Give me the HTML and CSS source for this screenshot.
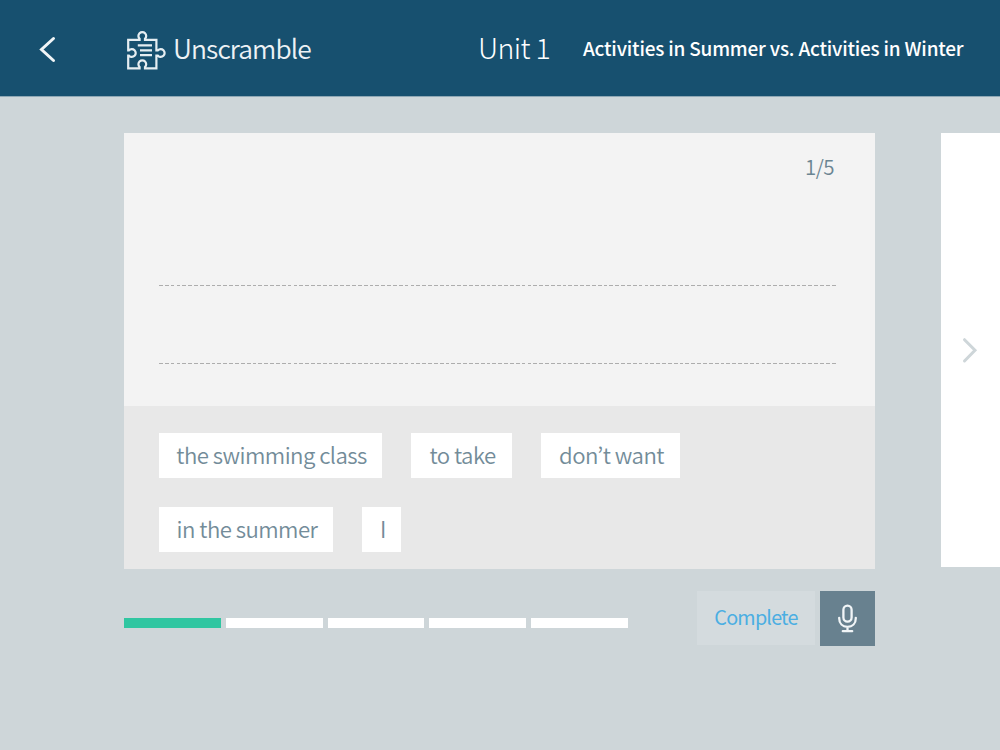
FILE: index.html
```html
<!DOCTYPE html>
<html lang="en">
<head>
    <meta charset="UTF-8">
    <meta name="viewport" content="width=device-width, initial-scale=1.0">
    <title>Unscramble</title>
    <link rel="stylesheet" href="styles.css">
</head>
<body>
    <header class="header">
        <a class="back" href="#" aria-label="Back">
            <svg width="20" height="30" viewBox="0 0 20 30">
                <path d="M16.5 5.5 L4.5 16.5 L16.5 27.5" />
            </svg>
        </a>
        <div class="activity">
            <svg class="puzzle" width="42" height="42" viewBox="0 0 42 42">
                <path d="M4.2 12.9 H15.6 V11.8 A3.9 3.9 0 1 1 21 11.8 V12.9 H32.4 V23.3 H33.9 A3.9 3.9 0 1 1 33.9 28.7 H32.4 V41.3 H21 V40 A3.9 3.9 0 1 0 15.6 40 V41.3 H4.2 V28.7 H5 A3.9 3.9 0 1 0 5 23.3 H4.2 Z" />
                <path class="text-lines" d="M13.8 18.4 H28 M16 23.3 H28 M16 28.1 H28" />
            </svg>
            <h1>Unscramble</h1>
        </div>
        <div class="unit">Unit 1</div>
        <div class="topic">Activities in Summer vs. Activities in Winter</div>
    </header>

    <main class="stage">
        <div class="slide">
            <section class="card">
                <!-- Answer lines -->
                <div class="answer">
                    <div class="count">1/5</div>
                    <div class="line"></div>
                    <div class="line"></div>
                </div>
                <!-- Word bank -->
                <div class="words">
                    <span class="word w1">the swimming class</span>
                    <span class="word w2">to take</span>
                    <span class="word w3">don’t want</span>
                    <span class="word w4">in the summer</span>
                    <span class="word w5">I</span>
                </div>
            </section>
            <div class="controls">
                <div class="progress">
                    <span class="step done"></span>
                    <span class="step"></span>
                    <span class="step"></span>
                    <span class="step"></span>
                    <span class="step"></span>
                </div>
                <button class="complete">Complete</button>
                <button class="mic" aria-label="Record">
                    <svg width="24" height="32" viewBox="0 0 24 32">
                        <rect x="7.4" y="2.6" width="8.2" height="16" rx="4.1" />
                        <path d="M3.2 14.8 V15.2 C3.2 20.6 6.6 23.8 11.5 23.8 C16.4 23.8 19.8 20.6 19.8 15.2 V14.8 M11.5 23.8 V28 M6.8 28.2 H16.2" />
                    </svg>
                </button>
            </div>
        </div>
        <aside class="next">
            <svg width="20" height="30" viewBox="0 0 20 30">
                <path d="M5.5 4.7 L16 15.3 L5.5 26" />
            </svg>
        </aside>
    </main>
</body>
</html>
```

FILE: styles.css
```css
* {
    box-sizing: border-box;
}

body {
    margin: 0;
    height: 750px;
    overflow: hidden;
    background-color: #ced6d9;
    font-family: "Noto Sans CJK KR", "Open Sans", sans-serif;
    font-weight: 350;
}

svg {
    display: block;
    fill: none;
    stroke: #f1f5f7;
    stroke-width: 2.3;
    stroke-linecap: round;
}

.header {
    display: flex;
    align-items: center;
    height: 96px;
    padding: 0 0 0 37px;
    background-color: #17506f;
    box-shadow: 0 1px 0 #8fa8b5;
    color: #fff;
    white-space: nowrap;
}

.back {
    width: 87px;
}

.back svg {
    stroke-width: 3;
}

.activity {
    display: flex;
    align-items: center;
    width: 354px;
}

.puzzle {
    margin-right: 7px;
    overflow: visible;
    stroke: #e6eef2;
    stroke-width: 2.2;
}

.text-lines {
    stroke-width: 2.2;
    stroke-linecap: butt;
}

h1 {
    margin: 0;
    padding-bottom: 1px;
    font-size: 26.4px;
    font-weight: 350;
    letter-spacing: -0.9px;
    color: #edf2f5;
}

.unit {
    width: 105px;
    font-size: 28.5px;
    font-weight: 300;
    letter-spacing: -0.6px;
    line-height: 40px;
    padding-bottom: 2px;
}

.topic {
    padding-bottom: 1px;
    font-size: 19px;
    font-weight: 500;
    letter-spacing: -0.2px;
}

.stage {
    display: flex;
    justify-content: space-between;
    padding: 37px 0 0 124px;
}

.slide {
    width: 751px;
}

.answer {
    height: 273px;
    padding: 16px 39px 0 35px;
    background-color: #f3f3f3;
}

.count {
    height: 136px;
    padding-right: 2px;
    text-align: right;
    font-size: 20.5px;
    letter-spacing: -0.5px;
    line-height: 35px;
    color: #6b8592;
}

.line {
    height: 1px;
    margin-bottom: 77px;
    background: repeating-linear-gradient(to right, #adadad 0, #adadad 3.8px, transparent 3.8px, transparent 5.85px);
}

.words {
    display: flex;
    flex-wrap: wrap;
    align-content: flex-start;
    gap: 29px;
    height: 163px;
    padding: 27px 35px 0;
    background-color: #e8e8e8;
}

.word {
    height: 45px;
    padding-left: 2px;
    background-color: #fff;
    text-align: center;
    font-size: 22.2px;
    letter-spacing: -0.55px;
    line-height: 43px;
    color: #738c99;
    white-space: nowrap;
}

.w1 {
    width: 223px;
}

.w2 {
    width: 101px;
}

.w3 {
    width: 139px;
    margin-right: 100px;
}

.w4 {
    width: 174px;
}

.w5 {
    width: 39px;
    padding-left: 3px;
}

.controls {
    display: flex;
    align-items: flex-start;
    margin-top: 22px;
}

.progress {
    display: flex;
    gap: 5px;
    width: 504px;
    margin-top: 27px;
    margin-right: 69px;
}

.step {
    flex: 1;
    height: 10px;
    background-color: #fff;
}

.done {
    background-color: #30c6a1;
}

button {
    padding: 0;
    border: none;
    font-family: inherit;
}

.complete {
    width: 118px;
    height: 54px;
    margin-right: 5px;
    padding-bottom: 4px;
    background-color: #d4dbde;
    color: #4baee2;
    font-size: 19.8px;
    letter-spacing: -0.8px;
}

.mic {
    display: flex;
    align-items: center;
    justify-content: center;
    width: 55px;
    height: 55px;
    background-color: #68818f;
}

.next {
    display: flex;
    align-items: center;
    width: 59px;
    height: 434px;
    padding-left: 18px;
    background-color: #fff;
}

.next svg {
    stroke: #ced6d9;
    stroke-width: 3;
}
```
